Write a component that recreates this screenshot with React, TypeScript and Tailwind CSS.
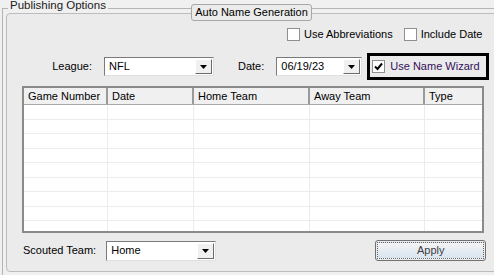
import React from "react";

const font = { fontFamily: '"Liberation Sans", Arial, sans-serif' };

function Arrow() {
  return (
    <svg width="7" height="4" viewBox="0 0 7 4">
      <path d="M0 0 H7 L3.5 4 Z" fill="#000" />
    </svg>
  );
}

function Combo({ value, w, h }: { value: string; w: string; h: string }) {
  return (
    <div className={`${w} ${h} flex bg-white border border-t-[#7a7a7a] border-l-[#7a7a7a] border-r-[#e0e0e0] border-b-[#e0e0e0]`}>
      <div className="flex-1 flex items-center pl-[4px] text-[11px] text-black leading-none">{value}</div>
      <div className="w-[17px] m-[1px] flex items-center justify-center bg-[#f0f0f0] border border-t-white border-l-white border-r-[#6b6b6b] border-b-[#6b6b6b]">
        <Arrow />
      </div>
    </div>
  );
}

function Check({ checked }: { checked?: boolean }) {
  return (
    <div className="w-[13px] h-[13px] bg-white border border-[#8f8f8f] flex items-center justify-center shrink-0">
      {checked && (
        <svg width="9" height="9" viewBox="0 0 9 9">
          <path d="M1 4.5 L3.5 7 L8 1.5" stroke="#000" strokeWidth="2" fill="none" />
        </svg>
      )}
    </div>
  );
}

const cols = ["Game Number", "Date", "Home Team", "Away Team", "Type"];
const widths = ["w-[84px]", "w-[86px]", "w-[116px]", "w-[115px]", "w-[57px]"];

export default function App() {
  const rows = Array.from({ length: 9 });
  return (
    <div className="relative w-[494px] h-[275px] bg-[#f0f0f0] overflow-hidden text-black" style={font}>
      {/* group box */}
      <div className="ml-[2px] mt-[8px] w-[500px] h-[280px] border-l border-t border-[#b4b4b4]">
        {/* inner panel */}
        <div className="ml-[3px] mt-[4px] w-[500px] h-[259px] rounded-[4px] border border-[#bcbcbc] bg-[#ebebeb] flex flex-col">
          {/* checkboxes row */}
          <div className="mt-[14px] h-[13px] flex items-center pl-[280px] text-[11px] leading-none">
            <Check />
            <span className="ml-[4px]">Use Abbreviations</span>
            <div className="ml-[11px]"><Check /></div>
            <span className="ml-[4px]">Include Date</span>
          </div>
          {/* league/date row */}
          <div className="mt-[12px] h-[27px] flex items-center text-[11px] leading-none">
            <div className="w-[85px] text-right">League:</div>
            <div className="ml-[12px]"><Combo value="NFL" w="w-[110px]" h="h-[19px]" /></div>
            <div className="ml-[24px]">Date:</div>
            <div className="ml-[12px]"><Combo value="06/19/23" w="w-[86px]" h="h-[19px]" /></div>
            <div className="ml-[5px] w-[122px] h-[27px] border-[3px] border-black flex items-center pl-[2px]">
              <Check checked />
              <span className="ml-[5px] text-[#34105a]">Use Name Wizard</span>
            </div>
          </div>
          {/* table */}
          <div className="mt-[6px] ml-[15px] w-[462px] h-[147px] bg-white border-2 border-[#8a8a8a] flex flex-col overflow-hidden">
            <div className="flex h-[17px] shrink-0 bg-[#f0f0f0] border-b border-[#a8a8a8] text-[11px] leading-none">
              {cols.map((c, i) => (
                <div key={c} className={`${widths[i]} h-full flex items-center pl-[4px] ${i < 4 ? "border-r-2 border-[#9a9a9a]" : ""}`}>
                  {c}
                </div>
              ))}
            </div>
            {rows.map((_, r) => (
              <div key={r} className="flex h-[14.5px] shrink-0 border-b border-[#ececec]">
                {cols.map((c, i) => (
                  <div key={c} className={`${widths[i]} h-full ${i < 4 ? "border-r border-[#ececec]" : ""}`} />
                ))}
              </div>
            ))}
          </div>
          {/* bottom row */}
          <div className="mt-[7px] flex items-center text-[11px] leading-none">
            <div className="ml-[16px]">Scouted Team:</div>
            <div className="ml-[10px]"><Combo value="Home" w="w-[110px]" h="h-[20px]" /></div>
            <div className="ml-[159px] w-[111px] h-[21px] rounded-[3px] border border-[#707070] p-[1px]">
              <div className="w-full h-full border border-dotted border-[#666] bg-gradient-to-b from-[#f4f4f4] to-[#d8e4f0] flex items-center justify-center text-[#404040]">
                Apply
              </div>
            </div>
          </div>
        </div>
      </div>
      {/* legend */}
      <div className="absolute left-[8px] top-[0px] px-[2px] bg-[#f0f0f0] text-[11.5px] leading-none text-[#1a1a1a]">Publishing Options</div>
      {/* Auto Name Generation tab */}
      <div className="absolute left-[191px] top-[4px] w-[121px] h-[17px] rounded-[3px] border border-[#a8a8a8] bg-[#ebebeb] flex items-center justify-center text-[11px] leading-none">
        Auto Name Generation
      </div>
    </div>
  );
}
